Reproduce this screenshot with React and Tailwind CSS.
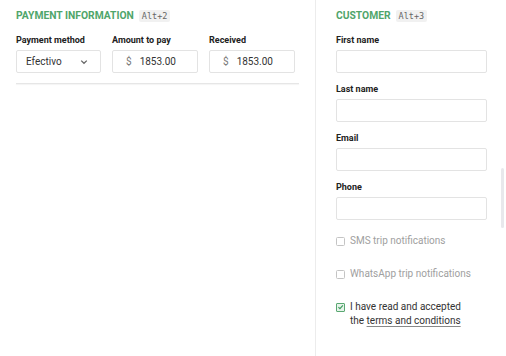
import React from "react";

function Kbd({ children }) {
  return (
    <span className="ml-[5px] rounded-[2px] bg-[#f1f1f1] px-[3px] py-[1px] font-['DejaVu_Sans_Mono',monospace] text-[8.5px] font-normal leading-[10px] text-[#666]">
      {children}
    </span>
  );
}

function Label({ children }) {
  return <div className="text-[9px] font-bold leading-[10px] text-[#222]">{children}</div>;
}

function Field({ label }) {
  return (
    <div>
      <Label>{label}</Label>
      <div className="mt-[5px] h-[23px] w-full rounded-[2px] border border-[#e3e3e3] bg-white" />
    </div>
  );
}

function Check({ checked, children }) {
  return (
    <div className="flex items-start gap-[5px] text-[10px] leading-[14px]">
      {checked ? (
        <span className="mt-[2.5px] flex h-[9px] w-[9px] items-center justify-center rounded-[1px] border border-[#5aa872] bg-[#e6f3ea]">
          <svg viewBox="0 0 10 10" className="h-[8px] w-[8px]">
            <path d="M2 5.2 L4.2 7.3 L8.4 2.6" fill="none" stroke="#3d9a5b" strokeWidth="1.6" />
          </svg>
        </span>
      ) : (
        <span className="mt-[2.5px] h-[9px] w-[9px] rounded-[1.5px] border border-[#c4c4c4] bg-white" />
      )}
      <div className={checked ? "text-[#333]" : "text-[#a0a0a0]"}>{children}</div>
    </div>
  );
}

export default function App() {
  return (
    <div className="flex h-[356px] w-[506px] overflow-hidden bg-white font-['Roboto',sans-serif]">
      {/* Payment */}
      <section className="w-[315px] px-4 pt-[10px]">
        <h2 className="flex items-center text-[10.3px] font-bold leading-[12px] text-[#4fa56a]">
          PAYMENT INFORMATION <Kbd>Alt+2</Kbd>
        </h2>
        <div className="mt-[13px] flex gap-[11px]">
          <div className="w-[85px]">
            <Label>Payment method</Label>
            <div className="mt-[5px] flex h-[23px] items-center justify-between rounded-[2px] border border-[#e3e3e3] pl-[9px] pr-[12px] text-[10px] text-[#333]">
              Efectivo
              <svg viewBox="0 0 10 10" className="h-[8px] w-[8px]">
                <path d="M1.5 3.3 L5 6.6 L8.5 3.3" fill="none" stroke="#666" strokeWidth="1.6" />
              </svg>
            </div>
          </div>
          {["Amount to pay", "Received"].map((l) => (
            <div key={l} className="w-[86px]">
              <Label>{l}</Label>
              <div className="mt-[5px] flex h-[23px] items-center gap-[8px] rounded-[2px] border border-[#e3e3e3] px-[13px] text-[10px] text-[#333]">
                <span className="text-[#777]">$</span>
                1853.00
              </div>
            </div>
          ))}
        </div>
        <div className="mt-[10px] h-px bg-[#e6e6e6] shadow-[0_1px_1px_rgba(0,0,0,0.05)]" />
      </section>

      <div className="w-px bg-[#ececec]" />

      {/* Customer */}
      <section className="relative flex-1 pl-[20px] pr-[19px] pt-[10px]">
        <h2 className="flex items-center text-[10.3px] font-bold leading-[12px] text-[#4fa56a]">
          CUSTOMER <Kbd>Alt+3</Kbd>
        </h2>
        <div className="mt-[13px] flex flex-col gap-[11px]">
          <Field label="First name" />
          <Field label="Last name" />
          <Field label="Email" />
          <Field label="Phone" />
        </div>
        <div className="mt-[14px] flex flex-col gap-[19px]">
          <Check>SMS trip notifications</Check>
          <Check>WhatsApp trip notifications</Check>
          <Check checked>
            I have read and accepted
            <br />
            the <span className="underline underline-offset-2 decoration-[#888]">terms and conditions</span>
          </Check>
        </div>
        <div className="absolute right-[2px] top-[168px] h-[60px] w-[3px] rounded-full bg-[#e8e8ec]" />
      </section>
    </div>
  );
}
